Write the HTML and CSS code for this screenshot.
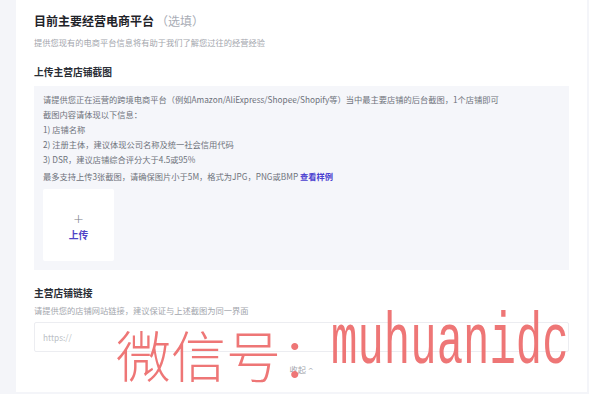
FILE: index.html
```html
<!DOCTYPE html>
<html lang="zh-CN">
<head>
<meta charset="utf-8">
<title>目前主要经营电商平台</title>
<link rel="stylesheet" href="styles.css">
</head>
<body>
<div class="page">
  <section class="card">
    <h1 class="title">目前主要经营电商平台<span class="optional">（选填）</span></h1>
    <p class="desc">提供您现有的电商平台信息将有助于我们了解您过往的经营经验</p>

    <h2 class="label label-first">上传主营店铺截图</h2>
    <div class="upload-box">
      <div class="tips">
        <p>请提供您正在运营的跨境电商平台（例如Amazon/AliExpress/Shopee/Shopify等）当中最主要店铺的后台截图，1个店铺即可</p>
        <p>截图内容请体现以下信息：</p>
        <p>1) 店铺名称</p>
        <p>2) 注册主体，建议体现公司名称及统一社会信用代码</p>
        <p>3) DSR，建议店铺综合评分大于4.5或95%</p>
        <p class="tips-last">最多支持上传3张截图，请确保图片小于5M，格式为JPG，PNG或BMP <a class="sample" href="#">查看样例</a></p>
      </div>
      <div class="uploader">
        <span class="plus">+</span>
        <span class="up-text">上传</span>
      </div>
    </div>

    <h2 class="label label-second">主营店铺链接</h2>
    <p class="desc desc-tight">请提供您的店铺网站链接，建议保证与上述截图为同一界面</p>
    <div class="input">https://</div>

    <div class="collapse">收起 <span class="caret">^</span></div>
  </section>
  <div class="watermark"><span class="wm-cn">微信号：</span><span class="wm-en">muhuanidc</span></div>
</div>
</body>
</html>
```

FILE: styles.css
```css
* { box-sizing: border-box; }
html, body { margin: 0; padding: 0; }
body {
  background: #f4f5f9;
  font-family: "Noto Sans CJK SC", "Noto Sans", sans-serif;
  width: 589px;
  height: 394px;
  overflow: hidden;
}
.page {
  position: relative;
  padding-left: 16px;
  padding-right: 2px;
  height: 394px;
}
.card {
  background: #ffffff;
  height: 392px;
  padding: 12px 18px 0 18px;
}
.title {
  margin: 0;
  font-size: 12px;
  line-height: 18px;
  font-weight: 700;
  color: #1f2329;
}
.optional {
  font-weight: 400;
  color: #a9adb6;
  margin-left: 2px;
}
.desc {
  margin: 6px 0 0 0;
  font-size: 8.25px;
  line-height: 12px;
  color: #a3a6ad;
}
.desc-tight { margin-top: 4px; }
.label {
  margin: 0;
  font-size: 9.75px;
  line-height: 14px;
  font-weight: 700;
  color: #2a2e36;
}
.label-first { margin-top: 17px; }
.label-second { margin-top: 16px; }
.upload-box {
  margin-top: 7px;
  background: #f5f6fa;
  padding: 6px 9px 8px 9px;
  height: 184px;
}
.tips p {
  margin: 0;
  font-size: 8.25px;
  line-height: 15px;
  color: #6e727a;
  white-space: nowrap;
}
.tips .tips-last { margin-top: 2px; }
.sample {
  color: #4b3fd0;
  font-weight: 700;
  text-decoration: none;
}
.uploader {
  margin-top: 5px;
  width: 71px;
  height: 72px;
  background: #ffffff;
  border-radius: 2px;
  display: flex;
  flex-direction: column;
  align-items: center;
  justify-content: center;
  padding-top: 4px;
}
.plus {
  font-size: 13px;
  line-height: 14px;
  color: #7a7d85;
  font-weight: 300;
  font-family: "DejaVu Sans", sans-serif;
}
.up-text {
  margin-top: 3px;
  font-size: 9.75px;
  line-height: 13px;
  font-weight: 700;
  color: #4e43c6;
}
.input {
  margin-top: 6px;
  height: 30px;
  border: 1px solid #ecedf1;
  border-radius: 2px;
  padding: 0 8px;
  display: flex;
  align-items: center;
  font-size: 8.25px;
  color: #bcbfc6;
}
.collapse {
  margin-top: 11px;
  text-align: center;
  font-size: 8.25px;
  line-height: 12px;
  color: #a3a6ad;
}
.caret {
  font-size: 7px;
  font-family: "DejaVu Sans", sans-serif;
}
.watermark {
  position: absolute;
  left: 116px;
  top: 320px;
  display: flex;
  align-items: flex-end;
  color: #ee7676;
  pointer-events: none;
  white-space: nowrap;
}
.wm-cn {
  font-family: "Noto Sans CJK SC", sans-serif;
  font-weight: 300;
  font-size: 55px;
  line-height: 66px;
  letter-spacing: 0;
}
.wm-en {
  display: inline-block;
  font-family: "Liberation Mono", monospace;
  font-size: 44px;
  line-height: 50px;
  margin-left: -5px;
  transform: scaleY(1.65);
  transform-origin: 50% 85%;
  margin-bottom: 6px;
}
```
